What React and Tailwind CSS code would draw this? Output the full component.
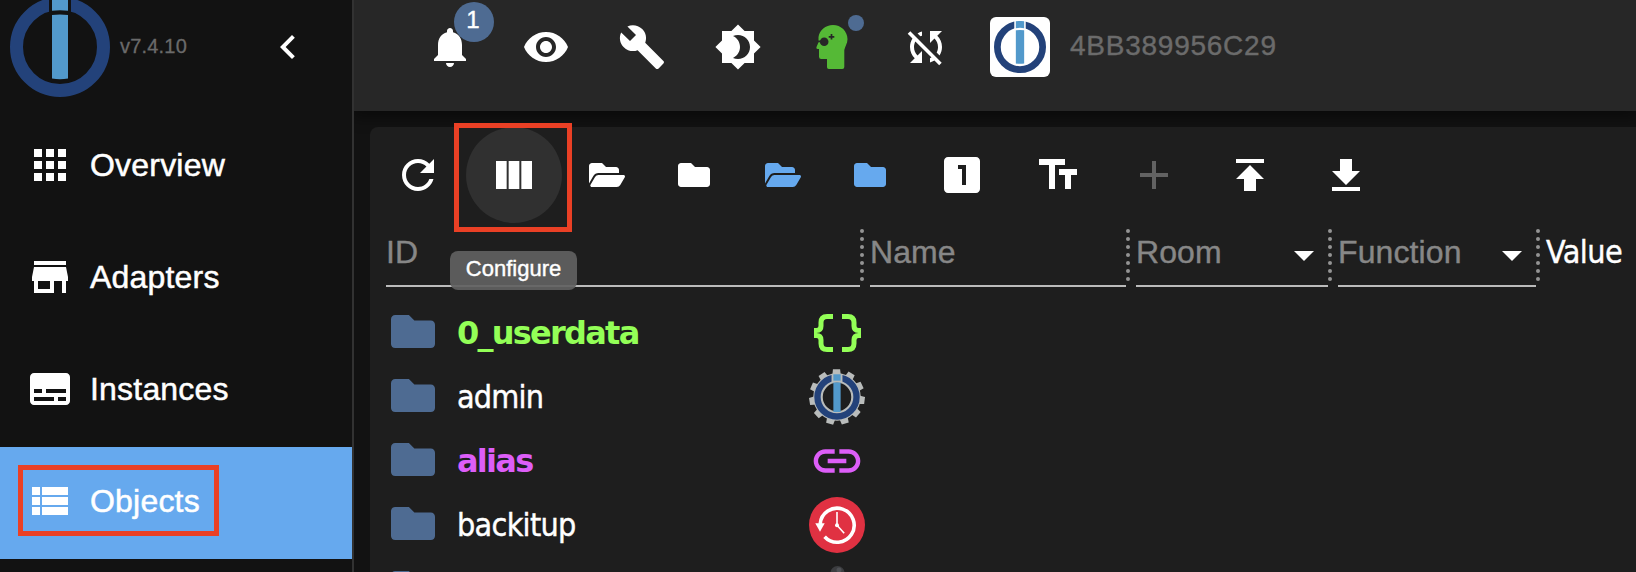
import React from 'react';

const PATHS = {
  apps: 'M4 8h4V4H4v4zm6 12h4v-4h-4v4zm-6 0h4v-4H4v4zm0-6h4v-4H4v4zm6 0h4v-4h-4v4zm6-10v4h4V4h-4zm-6 4h4V4h-4v4zm6 6h4v-4h-4v4zm0 6h4v-4h-4v4z',
  store: 'M20 4H4v2h16V4zm1 10v-2l-1-5H4l-1 5v2h1v6h10v-6h4v6h2v-6h1zm-9 4H6v-4h6v4z',
  subtitles: 'M20 4H4c-1.1 0-2 .9-2 2v12c0 1.1.9 2 2 2h16c1.1 0 2-.9 2-2V6c0-1.1-.9-2-2-2zM4 12h4v2H4v-2zm10 6H4v-2h10v2zm6 0h-4v-2h4v2zm0-4H10v-2h10v2z',
  viewList: 'M3 14h4v-4H3v4zm0 5h4v-4H3v4zM3 9h4V5H3v4zm5 5h13v-4H8v4zm0 5h13v-4H8v4zM8 5v4h13V5H8z',
  chevronLeft: 'M15.41 7.41 14 6l-6 6 6 6 1.41-1.41L10.83 12z',
  bell: 'M12 22c1.1 0 2-.9 2-2h-4c0 1.1.89 2 2 2zm6-6v-5c0-3.07-1.64-5.64-4.5-6.32V4c0-.83-.67-1.5-1.5-1.5s-1.5.67-1.5 1.5v.68C7.63 5.36 6 7.92 6 11v5l-2 2v1h16v-1l-2-2z',
  eye: 'M12 4.5C7 4.5 2.73 7.61 1 12c1.73 4.39 6 7.5 11 7.5s9.27-3.11 11-7.5c-1.73-4.39-6-7.5-11-7.5zM12 17c-2.76 0-5-2.24-5-5s2.24-5 5-5 5 2.24 5 5-2.24 5-5 5zm0-8c-1.66 0-3 1.34-3 3s1.34 3 3 3 3-1.34 3-3-1.34-3-3-3z',
  build: 'm22.7 19-9.1-9.1c.9-2.3.4-5-1.5-6.9-2-2-5-2.4-7.4-1.3L9 6 6 9 1.6 4.7C.4 7.1.9 10.1 2.9 12.1c1.9 1.9 4.6 2.4 6.9 1.5l9.1 9.1c.4.4 1 .4 1.4 0l2.3-2.3c.5-.4.5-1.1.1-1.4z',
  brightness: 'M20 8.69V4h-4.69L12 .69 8.69 4H4v4.69L.69 12 4 15.31V20h4.69L12 23.31 15.31 20H20v-4.69L23.31 12 20 8.69zM12 18c-.89 0-1.74-.2-2.5-.55C11.56 16.5 13 14.42 13 12s-1.44-4.5-3.5-5.45C10.26 6.2 11.11 6 12 6c3.31 0 6 2.69 6 6s-2.69 6-6 6z',
  syncDisabled: 'M10 6.35V4.26c-.8.21-1.55.54-2.23.96l1.46 1.46c.25-.12.5-.24.77-.33zm-7.14-.94 2.36 2.36C4.45 8.99 4 10.44 4 12c0 2.21.91 4.2 2.36 5.64L4 20h6v-6l-2.24 2.24C6.68 15.15 6 13.66 6 12c0-1 .25-1.94.68-2.77l8.08 8.08c-.25.13-.5.25-.77.34v2.09c.8-.21 1.55-.54 2.23-.96l2.36 2.36 1.27-1.27L4.14 4.14 2.86 5.41zM20 4h-6v6l2.24-2.24C17.32 8.85 18 10.34 18 12c0 1-.25 1.94-.68 2.77l1.46 1.46C19.55 15.01 20 13.56 20 12c0-2.21-.91-4.2-2.36-5.64L20 4z',
  refresh: 'M17.65 6.35C16.2 4.9 14.21 4 12 4c-4.42 0-7.99 3.58-7.99 8s3.57 8 7.99 8c3.73 0 6.84-2.55 7.73-6h-2.08c-.82 2.33-3.04 4-5.65 4-3.31 0-6-2.69-6-6s2.69-6 6-6c1.66 0 3.14.69 4.22 1.78L13 11h7V4l-2.35 2.35z',
  viewColumn: 'M14.67 5v14H9.33V5h5.34zm1 14H21V5h-5.33v14zm-7.34 0V5H3v14h5.33z',
  looksOne: 'M19 3H5c-1.1 0-2 .9-2 2v14c0 1.1.9 2 2 2h14c1.1 0 2-.9 2-2V5c0-1.1-.9-2-2-2zm-5 14h-2V9h-2V7h4v10z',
  textFields: 'M2.5 4v3h5v12h3V7h5V4h-13zm19 5h-9v3h3v7h3v-7h3V9z',
  add: 'M19 13h-6v6h-2v-6H5v-2h6V5h2v6h6v2z',
  publish: 'M5 4v2h14V4H5zm0 10h4v6h6v-6h4l-7-7-7 7z',
  arrowDropDown: 'm7 10 5 5 5-5z',
  link: 'M3.9 12c0-1.71 1.39-3.1 3.1-3.1h4V7H7c-2.76 0-5 2.24-5 5s2.24 5 5 5h4v-1.9H7c-1.71 0-3.1-1.39-3.1-3.1zM8 13h8v-2H8v2zm9-6h-4v1.9h4c1.71 0 3.1 1.39 3.1 3.1s-1.39 3.1-3.1 3.1h-4V17h4c2.76 0 5-2.24 5-5s-2.24-5-5-5z',
};

function Icon({ name, className = 'size-12' }) {
  return (
    <svg viewBox="0 0 24 24" fill="currentColor" className={`shrink-0 ${className}`}>
      <path d={PATHS[name]} />
    </svg>
  );
}

function Folder({ className }) {
  return (
    <svg viewBox="0 64 512 384" fill="currentColor" className={`shrink-0 ${className}`}>
      <path d="M464 128H272l-64-64H48C21.49 64 0 85.49 0 112v288c0 26.51 21.49 48 48 48h416c26.51 0 48-21.49 48-48V176c0-26.51-21.49-48-48-48z" />
    </svg>
  );
}

function FolderOpen({ className }) {
  return (
    <svg viewBox="0 64 576 384" fill="currentColor" className={`shrink-0 ${className}`}>
      <path d="M572.694 292.093L500.27 416.248A63.997 63.997 0 0 1 444.989 448H45.025c-18.523 0-30.064-20.093-20.731-36.093l72.424-124.155A64 64 0 0 1 152 256h399.964c18.523 0 30.064 20.093 20.73 36.093zM152 224h328v-48c0-26.51-21.49-48-48-48H272l-64-64H48C21.49 64 0 85.49 0 112v278.046l69.077-118.418C86.214 242.25 117.989 224 152 224z" />
    </svg>
  );
}

function LogoMark({ gap }) {
  return (
    <g>
      <circle cx="50" cy="50" r="43.5" fill="none" stroke="#23427a" strokeWidth="13" />
      <rect x="39" y="-1" width="22" height="18" fill={gap} />
      <path d="M42 .5Q50 -.6 58 .5V13.8Q50 12.6 42 13.8Z" fill="#5299cb" />
      <path d="M42 18Q50 17 58 18V81.500Q50 83 42 81.500Z" fill="#5299cb" />
    </g>
  );
}

function Logo({ gap, className }) {
  return (
    <svg viewBox="0 0 100 100" className={`shrink-0 ${className}`}>
      <LogoMark gap={gap} />
    </svg>
  );
}

function ExpertHead() {
  return (
    <svg viewBox="0 0 32 44" className="h-11 w-8 shrink-0">
      <path
        d="M17 0C25 0 31.500 6.200 31.500 14.300C31.500 18.500 29 21.500 28.300 25V42Q28.300 44 26.300 44H12.800Q11 44 11 42.200V34H5.200Q3 34 3 31.800V24H1.600Q0 24 .4 22.300L2.500 17.300V12C3.500 5 9.500 0 17 0Z"
        fill="#55b936"
      />
      <circle cx="8.200" cy="16.700" r="4.300" fill="#272727" />
      <path d="M1.500 16.300H6M15.500 9V14.600M12.700 11.800H18.300" stroke="#272727" strokeWidth="1.700" />
    </svg>
  );
}

function BracesIcon() {
  return (
    <svg viewBox="0 0 47 38" fill="none" stroke="#93ff57" strokeWidth="5" className="h-[38px] w-[47px]">
      <path d="M19 2.500H13Q7 2.500 7 8.500V12Q7 16.500 2.500 16.500H0M0 21.500H2.500Q7 21.500 7 26V29.500Q7 35.500 13 35.500H19" />
      <path d="M28 2.500H34Q40 2.500 40 8.500V12Q40 16.500 44.500 16.500H47M47 21.500H44.500Q40 21.500 40 26V29.500Q40 35.500 34 35.500H28" />
    </svg>
  );
}

const TEETH = Array.from({ length: 11 }, (_, i) => (i * 360) / 11 - 1);

function AdminIcon() {
  return (
    <svg viewBox="0 0 56 56" className="size-14">
      {TEETH.map((a) => (
        <path key={a} d="M23.700 7L24.400 .2H31.600L32.300 7Z" fill="#b9bcbb" transform={`rotate(${a} 28 28)`} />
      ))}
      <circle cx="28" cy="28" r="19" fill="none" stroke="#b9bcbb" strokeWidth="9.500" />
      <g transform="translate(5.300 5.300) scale(.454)">
        <circle cx="50" cy="50" r="43" fill="none" stroke="#23427a" strokeWidth="14" />
        <rect x="38" y="-1" width="24" height="18" fill="#b9bcbb" />
        <rect x="42" y="0" width="16" height="14" fill="#5299cb" />
        <rect x="42" y="18" width="16" height="65" fill="#5299cb" />
      </g>
    </svg>
  );
}

function BackupIcon() {
  return (
    <svg viewBox="0 0 56 56" className="size-14">
      <circle cx="28" cy="28" r="28" fill="#e03142" />
      <path d="M11.200 27A17 17 0 1 1 15.600 39.700" fill="none" stroke="#fff" strokeWidth="3.600" />
      <path d="M6.300 26.300H15.700L11 34.700Z" fill="#fff" />
      <path d="M28 15V28.300L35.200 36.300" fill="none" stroke="#fff" strokeWidth="1.600" />
      <circle cx="28" cy="28.300" r="2" fill="#fff" />
    </svg>
  );
}

function BallIcon() {
  return (
    <svg viewBox="0 0 56 56" className="size-14">
      <circle cx="28.500" cy="12" r="7" fill="#3c3d40" />
      <circle cx="30" cy="9" r="2.500" fill="#4f5155" />
    </svg>
  );
}

const NAV = [
  { label: 'Overview', icon: 'apps' },
  { label: 'Adapters', icon: 'store' },
  { label: 'Instances', icon: 'subtitles' },
  { label: 'Objects', icon: 'viewList', active: true },
];

function Sidebar() {
  return (
    <aside className="flex h-full w-[354px] shrink-0 flex-col border-r-2 border-[#323232] bg-[#121212]">
      <div className="flex h-[111px] shrink-0 items-start pl-2.5">
        <Logo gap="#121212" className="-mt-[3px] size-[100px]" />
        <span className="ml-2.5 mt-[34px] text-[20px] leading-6 tracking-[0.2px] text-[#6a6a6a] [-webkit-text-stroke:0.3px]">
          v7.4.10
        </span>
        <Icon name="chevronLeft" className="ml-auto mr-10 mt-[23px] size-12" />
      </div>
      {NAV.map(({ label, icon, active }) => (
        <div
          key={label}
          className={`relative flex h-28 shrink-0 items-center pb-1 pl-[26px] ${active ? 'bg-[#66a9ee]' : ''}`}
        >
          <Icon name={icon} />
          <span className="ml-4 text-[32px] leading-10 tracking-[0.2px] [-webkit-text-stroke:0.5px]">{label}</span>
          {active && <div className="absolute left-[18px] top-[18px] h-[71px] w-[201px] border-[5.5px] border-[#ea4025]" />}
        </div>
      ))}
    </aside>
  );
}

function BarCell({ children, className = 'w-24' }) {
  return <div className={`flex h-24 shrink-0 items-center justify-center ${className}`}>{children}</div>;
}

function TopBar() {
  return (
    <header className="flex h-[111px] shrink-0 items-start bg-[#272727] pl-12 shadow-[0_4px_14px_2px_rgba(0,0,0,0.45)]">
      <div className="-mt-px flex items-center">
        <BarCell>
          <div className="relative">
            <Icon name="bell" />
            <span className="absolute left-7 top-[-21px] flex size-10 items-center justify-center rounded-full bg-[#4e6b92] pb-1 pr-0.5 text-[24px] leading-none [-webkit-text-stroke:0.4px]">
              1
            </span>
          </div>
        </BarCell>
        <BarCell><Icon name="eye" /></BarCell>
        <BarCell><Icon name="build" /></BarCell>
        <BarCell><Icon name="brightness" /></BarCell>
        <BarCell className="w-[92px]">
          <div className="relative">
            <ExpertHead />
            <span className="absolute left-8 top-[-10px] size-4 rounded-full bg-[#4e6b92]" />
          </div>
        </BarCell>
        <BarCell><Icon name="syncDisabled" /></BarCell>
        <div className="ml-4 flex size-[60px] items-center justify-center rounded-md bg-white">
          <Logo gap="#ffffff" className="size-[52px]" />
        </div>
        <span className="ml-5 pb-[3px] text-[28px] leading-8 tracking-[0.75px] text-[#6b6b6b] [-webkit-text-stroke:0.4px]">
          4BB389956C29
        </span>
      </div>
    </header>
  );
}

function Toolbar() {
  return (
    <div className="flex h-24 shrink-0 items-center">
      <BarCell><Icon name="refresh" /></BarCell>
      <BarCell className="relative w-24 rounded-full bg-[#303030]">
        <Icon name="viewColumn" />
        <div className="absolute left-[-12px] top-[-4px] h-[109px] w-[118px] border-[5.5px] border-[#ea4025]" />
        <div className="absolute left-[-16px] top-[124px] z-10 flex h-[39px] w-[127px] items-center justify-center rounded-lg bg-[#616161]/92 pb-1 text-[22px] leading-7 [-webkit-text-stroke:0.4px]">
          Configure
        </div>
      </BarCell>
      <BarCell className="w-[88px] pl-0.5"><FolderOpen className="h-6 w-9" /></BarCell>
      <BarCell className="w-[88px] pr-px"><Folder className="h-6 w-8" /></BarCell>
      <BarCell className="w-[88px] pl-0.5 text-[#66a9ee]"><FolderOpen className="h-6 w-9" /></BarCell>
      <BarCell className="w-[88px] pr-px text-[#66a9ee]"><Folder className="h-6 w-8" /></BarCell>
      <BarCell><Icon name="looksOne" /></BarCell>
      <BarCell><Icon name="textFields" /></BarCell>
      <BarCell className="w-24 text-[#626262]"><Icon name="add" /></BarCell>
      <BarCell><Icon name="publish" /></BarCell>
      <BarCell><Icon name="publish" className="size-12 rotate-180" /></BarCell>
    </div>
  );
}

function Field({ label, select, className }) {
  return (
    <div className={`flex h-16 shrink-0 items-center border-b-2 border-[#bbbbbb] text-[#878787] ${className}`}>
      <span className="pb-[5px] text-[32px] leading-9 tracking-[0.1px] [-webkit-text-stroke:0.4px]">{label}</span>
      {select && <Icon name="arrowDropDown" className="ml-auto mt-0.5 size-12 text-white" />}
    </div>
  );
}

function Dots() {
  return (
    <div className="flex h-16 w-2.5 shrink-0 flex-col gap-1 pt-1.5">
      {[0, 1, 2, 3, 4, 5, 6].map((i) => (
        <span key={i} className="size-1 shrink-0 rounded-full bg-[#949494]" />
      ))}
    </div>
  );
}

const REGULAR = "font-['DejaVu_Sans_Condensed','DejaVu_Sans',sans-serif] [-webkit-text-stroke:0.4px]";
const BOLD = "font-['DejaVu_Sans',sans-serif] font-bold";

const ROWS = [
  { id: '0_userdata', style: `${BOLD} text-[#93ff57] tracking-[-1.75px]`, icon: <BracesIcon /> },
  { id: 'admin', style: `${REGULAR} tracking-[-0.8px]`, icon: <AdminIcon /> },
  { id: 'alias', style: `${BOLD} text-[#dd5ef8] tracking-[-1.75px]`, icon: <Icon name="link" className="size-14 text-[#dd5ef8]" /> },
  { id: 'backitup', style: `${REGULAR} tracking-[-0.7px]`, icon: <BackupIcon /> },
  { id: '', style: '', icon: <BallIcon /> },
];

function ObjectBrowser() {
  return (
    <section className="ml-4 mt-4 flex min-h-0 flex-1 flex-col rounded-tl-lg bg-[#1e1e1e]">
      <Toolbar />
      <div className="flex h-16 shrink-0 pl-4">
        <Field label="ID" className="w-[474px]" />
        <Dots />
        <Field label="Name" className="w-[256px]" />
        <Dots />
        <Field label="Room" select className="w-[192px]" />
        <Dots />
        <Field label="Function" select className="w-[198px]" />
        <Dots />
        <span className={`mt-[9px] text-[32px] leading-10 tracking-[-0.5px] ${REGULAR}`}>Value</span>
      </div>
      <div className="flex flex-col pt-3.5">
        {ROWS.map(({ id, style, icon }) => (
          <div key={id} className="flex h-16 shrink-0 items-center pl-[21px]">
            <Folder className="-mt-1 h-[33px] w-11 text-[#4e6b92]" />
            <span className={`ml-[22px] w-[351px] pb-px text-[32px] leading-10 ${style}`}>{id}</span>
            <div className="-ml-px flex h-14 w-[60px] items-center justify-center">{icon}</div>
          </div>
        ))}
      </div>
    </section>
  );
}

export default function App() {
  return (
    <div className="flex h-[572px] w-[1636px] overflow-hidden bg-[#121212] font-['Liberation_Sans',Arial,sans-serif] text-white">
      <Sidebar />
      <main className="flex min-w-0 flex-1 flex-col overflow-hidden">
        <TopBar />
        <ObjectBrowser />
      </main>
    </div>
  );
}
